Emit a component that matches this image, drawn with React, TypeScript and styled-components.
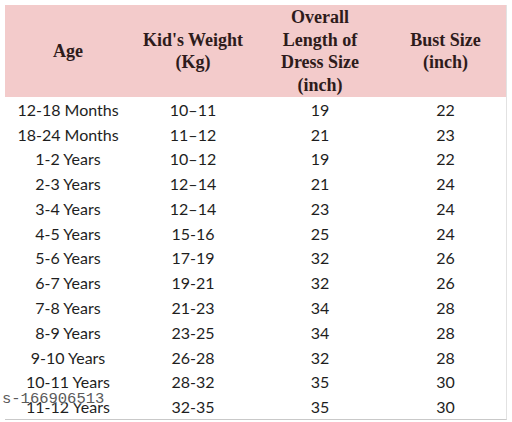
import React from "react";
import styled, { createGlobalStyle } from "styled-components";

const Global = createGlobalStyle`
  html, body { margin: 0; padding: 0; background: #ffffff; }
  body { width: 512px; height: 422px; overflow: hidden; }
`;

const Page = styled.div`
  position: relative;
  width: 512px;
  height: 422px;
  padding: 5px 5px 0 5px;
  box-sizing: border-box;
  background: #fff;
`;

const Table = styled.div`
  width: 501px;
  display: grid;
  grid-template-columns: 126px 124px 130px 121px;
  border-right: 1px solid #e2e2e2;
  border-bottom: 1px solid #c9c9c9;
`;

const HeadCell = styled.div`
  height: 92px;
  background: #f3cbcb;
  display: flex;
  align-items: center;
  justify-content: center;
  text-align: center;
  font-family: "Liberation Serif", "Times New Roman", serif;
  font-weight: bold;
  font-size: 18px;
  line-height: 22.5px;
  color: #2e1b1b;
`;

const Cell = styled.div`
  height: 24.77px;
  display: flex;
  align-items: center;
  justify-content: center;
  font-family: Lato, "Open Sans", sans-serif;
  font-size: 16px;
  color: #1e1e1e;
  white-space: nowrap;
`;

const Watermark = styled.div`
  position: absolute;
  left: 2px;
  top: 391px;
  font-family: "Liberation Mono", monospace;
  font-size: 15.5px;
  line-height: 16px;
  color: #5a5a5a;
  text-shadow: 0 0 2px #fff, 0 0 2px #fff;
`;

const rows: [string, string, string, string][] = [
  ["12-18 Months", "10–11", "19", "22"],
  ["18-24 Months", "11–12", "21", "23"],
  ["1-2 Years", "10–12", "19", "22"],
  ["2-3 Years", "12–14", "21", "24"],
  ["3-4 Years", "12–14", "23", "24"],
  ["4-5 Years", "15-16", "25", "24"],
  ["5-6 Years", "17-19", "32", "26"],
  ["6-7 Years", "19-21", "32", "26"],
  ["7-8 Years", "21-23", "34", "28"],
  ["8-9 Years", "23-25", "34", "28"],
  ["9-10 Years", "26-28", "32", "28"],
  ["10-11 Years", "28-32", "35", "30"],
  ["11-12 Years", "32-35", "35", "30"],
];

export default function App() {
  return (
    <Page>
      <Global />
      <Table>
        <HeadCell>Age</HeadCell>
        <HeadCell>
          Kid's Weight
          <br />
          (Kg)
        </HeadCell>
        <HeadCell>
          Overall
          <br />
          Length of
          <br />
          Dress Size
          <br />
          (inch)
        </HeadCell>
        <HeadCell>
          Bust Size
          <br />
          (inch)
        </HeadCell>
        {rows.map((r, i) => (
          <React.Fragment key={i}>
            {r.map((c, j) => (
              <Cell key={j}>{c}</Cell>
            ))}
          </React.Fragment>
        ))}
      </Table>
      <Watermark>s-166906513</Watermark>
    </Page>
  );
}
